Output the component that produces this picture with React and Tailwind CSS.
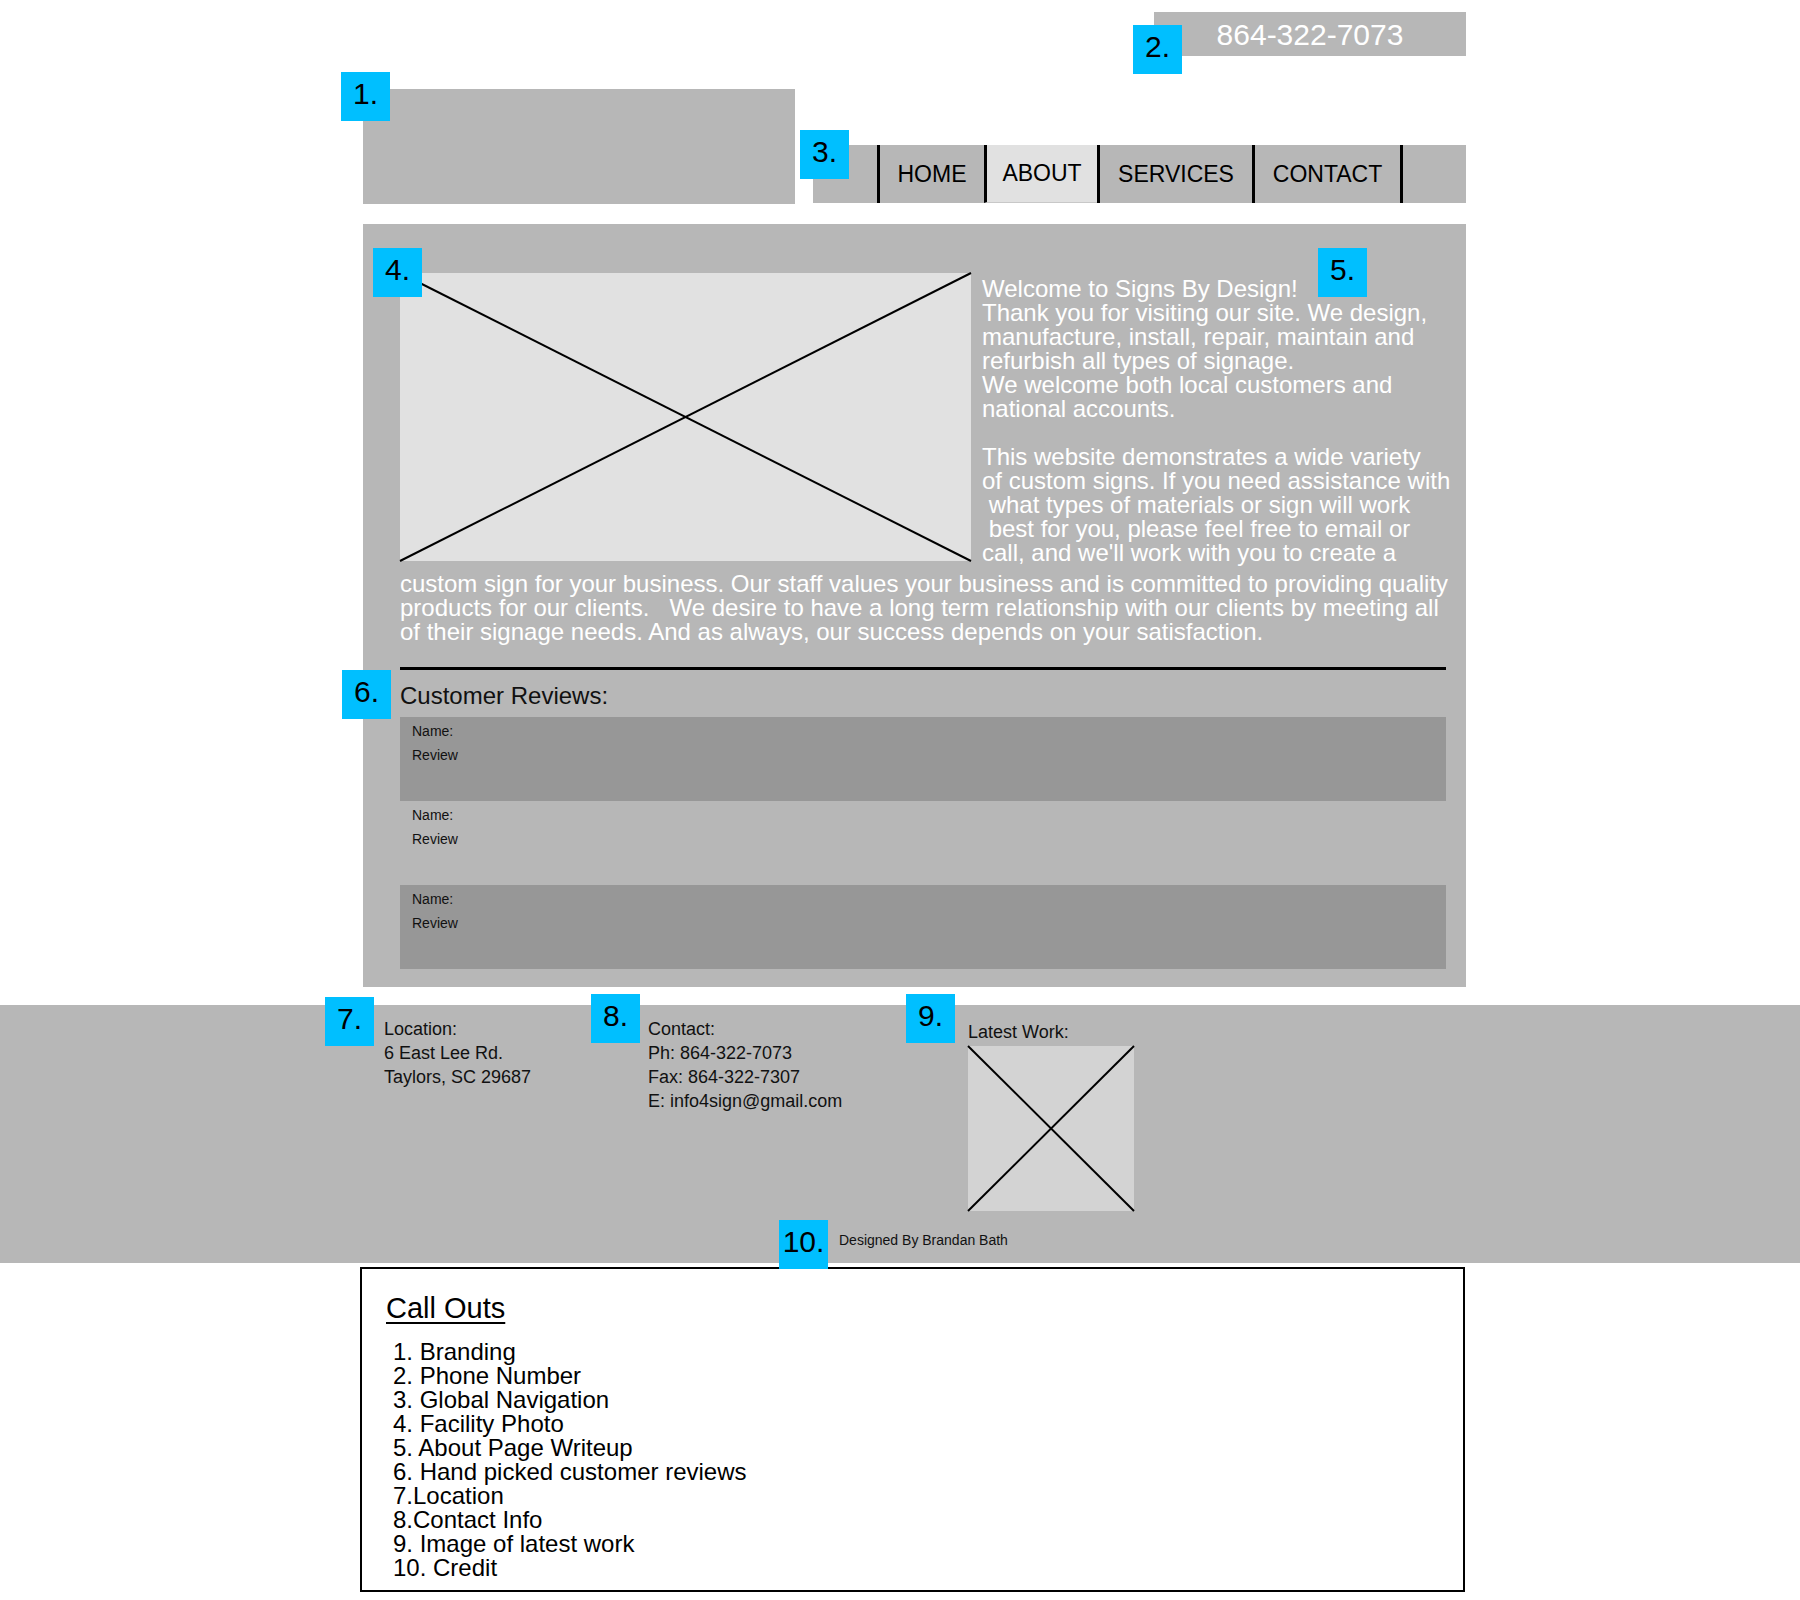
import React from 'react';

const introLines = [
  'Welcome to Signs By Design!',
  'Thank you for visiting our site. We design,',
  'manufacture, install, repair, maintain and',
  'refurbish all types of signage.',
  'We welcome both local customers and',
  'national accounts.',
  '',
  'This website demonstrates a wide variety',
  'of custom signs. If you need assistance with',
  ' what types of materials or sign will work',
  ' best for you, please feel free to email or',
  "call, and we'll work with you to create a",
];

const outroLines = [
  'custom sign for your business. Our staff values your business and is committed to providing quality',
  'products for our clients.   We desire to have a long term relationship with our clients by meeting all',
  'of their signage needs. And as always, our success depends on your satisfaction.',
];

const callOuts = [
  '1. Branding',
  '2. Phone Number',
  '3. Global Navigation',
  '4. Facility Photo',
  '5. About Page Writeup',
  '6. Hand picked customer reviews',
  '7.Location',
  '8.Contact Info',
  '9. Image of latest work',
  '10. Credit',
];

function Badge({ n, className }) {
  return (
    <div
      className={
        'absolute w-[49px] h-[49px] bg-[#00bfff] text-black text-[30px] leading-[30px] pt-[7px] text-center ' +
        className
      }
    >
      {n}.
    </div>
  );
}

function Cross() {
  return (
    <svg className="w-full h-full overflow-visible" viewBox="0 0 100 100" preserveAspectRatio="none">
      <line x1="0" y1="0" x2="100" y2="100" stroke="#000" strokeWidth="2" vectorEffect="non-scaling-stroke" />
      <line x1="100" y1="0" x2="0" y2="100" stroke="#000" strokeWidth="2" vectorEffect="non-scaling-stroke" />
    </svg>
  );
}

function Lines({ lines }) {
  return lines.map((l, i) =>
    l ? (
      <div key={i} className="w-fit whitespace-pre">
        {l}
      </div>
    ) : (
      <div key={i} className="h-[24px]" />
    )
  );
}

function Review({ shaded }) {
  return (
    <div className={'h-[84px] pl-[12px] pt-[2px] text-[14px] leading-[24px] text-[#111] ' + (shaded ? 'bg-[#979797]' : '')}>
      <div>Name:</div>
      <div>Review</div>
    </div>
  );
}

export default function App() {
  return (
    <div className="w-[1800px] min-h-[1600px] bg-white font-['Liberation_Sans',Arial,sans-serif] text-black">
      {/* Header */}
      <div className="ml-[363px] w-[1103px]">
        <div className="flex justify-end pt-[12px]">
          <div className="relative w-[312px] h-[44px] bg-[#b7b7b7] flex items-center justify-center text-white text-[30px]">
            864-322-7073
            <Badge n="2" className="left-[-21px] top-[13px]" />
          </div>
        </div>

        <div className="flex items-end mt-[33px]">
          <div className="relative w-[432px] h-[115px] bg-[#b7b7b7] shrink-0">
            <Badge n="1" className="left-[-22px] top-[-17px]" />
          </div>
          <nav className="relative ml-[18px] mb-[1px] flex-1 h-[58px] bg-[#b7b7b7] flex text-[23px] text-black">
            <div className="w-[64px]" />
            <div className="w-[107px] border-l-[3px] border-black flex items-center justify-center">HOME</div>
            <div className="w-[113px] border-l-[3px] border-black bg-[#e1e1e1] border-b border-b-[#c8c8c8] flex items-center justify-center">ABOUT</div>
            <div className="w-[155px] border-l-[3px] border-black flex items-center justify-center">SERVICES</div>
            <div className="w-[151px] border-x-[3px] border-black flex items-center justify-center">CONTACT</div>
            <Badge n="3" className="left-[-13px] top-[-15px]" />
          </nav>
        </div>

        {/* Main panel */}
        <div className="relative mt-[20px] bg-[#b7b7b7] pt-[49px] pl-[37px] pr-[20px] pb-[18px]">
          <div className="flex items-start">
            <div className="w-[571px] h-[288px] bg-[#e1e1e1] shrink-0">
              <Cross />
            </div>
            <div className="ml-[11px] mt-[4px] text-white text-[24px] leading-[24px]">
              <Lines lines={introLines} />
            </div>
          </div>
          <div className="mt-[7px] text-white text-[24px] leading-[24px]">
            <Lines lines={outroLines} />
          </div>

          <div className="mt-[23px] h-[3px] bg-black" />

          <div className="relative mt-[14px] text-[24px] leading-[24px] text-[#111]">
            Customer Reviews:
            <Badge n="6" className="left-[-58px] top-[-14px]" />
          </div>
          <div className="mt-[9px]">
            <Review shaded />
            <Review />
            <Review shaded />
          </div>

          <Badge n="4" className="left-[10px] top-[24px]" />
          <Badge n="5" className="left-[955px] top-[24px]" />
        </div>
      </div>

      {/* Footer */}
      <div className="mt-[18px] bg-[#b7b7b7] pl-[384px] pt-[12px] pb-[15px] text-[#111]">
        <div className="flex text-[18px] leading-[24px]">
          <div className="relative w-[264px]">
            <div>Location:</div>
            <div>6 East Lee Rd.</div>
            <div>Taylors, SC 29687</div>
            <Badge n="7" className="left-[-59px] top-[-20px]" />
          </div>
          <div className="relative w-[320px]">
            <div>Contact:</div>
            <div>Ph: 864-322-7073</div>
            <div>Fax: 864-322-7307</div>
            <div>E: info4sign@gmail.com</div>
            <Badge n="8" className="left-[-57px] top-[-23px]" />
          </div>
          <div className="relative pt-[3px]">
            <div>Latest Work:</div>
            <div className="mt-[2px] w-[166px] h-[165px] bg-[#d3d3d3]">
              <Cross />
            </div>
            <Badge n="9" className="left-[-62px] top-[-23px]" />
          </div>
        </div>
        <div className="mt-[21px] ml-[455px] relative text-[14px] leading-[16px]">
          Designed By Brandan Bath
          <Badge n="10" className="left-[-60px] top-[-12px]" />
        </div>
      </div>

      {/* Call outs */}
      <div className="mt-[4px] ml-[360px] w-[1105px] h-[325px] border-2 border-black pt-[22px] pl-[24px]">
        <div className="w-fit text-[29px] leading-[34px] underline decoration-2 underline-offset-[4px]">Call Outs</div>
        <div className="mt-[15px] pl-[7px] text-[24px] leading-[24px]">
          {callOuts.map((c) => (
            <div key={c}>{c}</div>
          ))}
        </div>
      </div>
    </div>
  );
}
